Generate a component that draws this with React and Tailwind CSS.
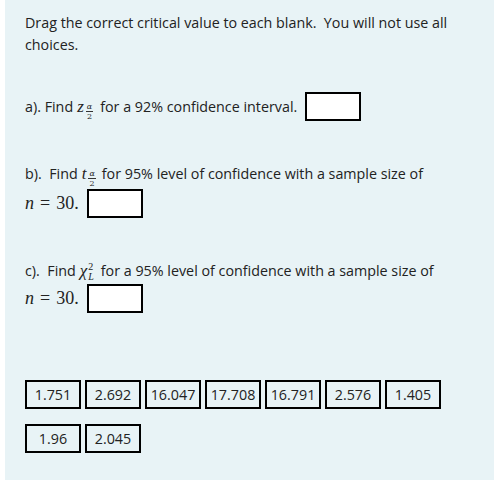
import React from "react";

const choices = ["1.751", "2.692", "16.047", "17.708", "16.791", "2.576", "1.405", "1.96", "2.045"];

const Blank = () => (
  <span className="inline-block w-[56px] h-[29px] bg-white border-2 border-black align-middle" />
);

const HalfAlpha = () => (
  <span className="inline-flex flex-col items-center relative top-[5px] mx-[2px] leading-none font-['DejaVu_Serif',serif]">
    <span className="text-[8px] italic border-b border-[#333] px-[1px] leading-[8px]">α</span>
    <span className="text-[8px] leading-[9px]">2</span>
  </span>
);

const NEq = () => (
  <span className="font-['Liberation_Serif',serif] text-[18px] flex items-center">
    <i>n</i>
    <span className="mx-[6px]">=</span>
    <span>30.</span>
  </span>
);

export default function App() {
  return (
    <div className="w-[498px] h-[484px] bg-white font-['Open_Sans','Noto_Sans',sans-serif] text-[14.3px] text-[#222]">
      <div className="ml-[5px] w-[489px] h-[480px] bg-[#e8f3f6] pl-[20px] pt-[12px]">
        <p className="leading-[22px] pr-[40px]">
          Drag the correct critical value to each blank.&nbsp; You will not use all choices.
        </p>

        <div className="mt-[36px] flex items-center">
          <span>a). Find </span>
          <span className="ml-[4px] font-['Liberation_Serif',serif] italic text-[17px]">z</span>
          <HalfAlpha />
          <span className="ml-[5px]">for a 92% confidence interval.</span>
          <span className="ml-[8px]"><Blank /></span>
        </div>

        <div className="mt-[42px]">
          <div className="leading-[22px] flex items-center">
            <span>b).&nbsp; Find </span>
            <span className="ml-[4px] font-['Liberation_Serif',serif] italic text-[17px]">t</span>
            <HalfAlpha />
            <span className="ml-[4px]">for 95% level of confidence with a sample size of</span>
          </div>
          <div className="mt-[4px] flex items-center gap-[8px]">
            <NEq />
            <Blank />
          </div>
        </div>

        <div className="mt-[42px]">
          <div className="leading-[22px] flex items-center">
            <span>c).&nbsp; Find </span>
            <span className="ml-[4px] inline-flex items-center font-['Liberation_Serif',serif] text-[17px]">
              <i>χ</i>
              <span className="inline-flex flex-col text-[10px] leading-[10px] ml-[1px] relative top-[1px]">
                <span>2</span>
                <i>L</i>
              </span>
            </span>
            <span className="ml-[7px]">for a 95% level of confidence with a sample size of</span>
          </div>
          <div className="mt-[2px] flex items-center gap-[8px]">
            <NEq />
            <Blank />
          </div>
        </div>

        <div className="mt-[67px] flex flex-wrap gap-x-[4px] gap-y-[15px] w-[430px]">
          {choices.map((c) => (
            <span
              key={c}
              className="w-[56px] h-[29px] border-2 border-black flex items-center justify-center"
            >
              {c}
            </span>
          ))}
        </div>
      </div>
    </div>
  );
}
